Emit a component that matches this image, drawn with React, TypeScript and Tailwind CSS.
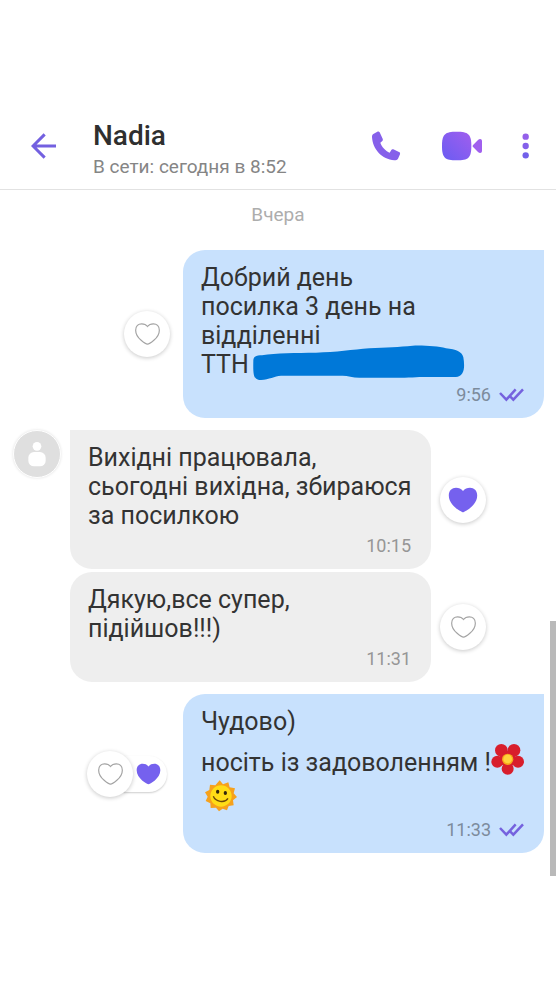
import type { ReactNode } from "react";
import clsx from "clsx";

// types
interface Message {
  id: number;
  own: boolean;
  tail: boolean;
  avatar: boolean;
  content: ReactNode;
  time: string;
  reaction: "none" | "liked" | "both";
}

const HEART =
  "M37.5 63 C34 63 2 46 2 21 C2 9 10 2 20 2 C27 2 33 4 37.5 10 C42 4 48 2 55 2 C65 2 73 9 73 21 C73 46 41 63 37.5 63Z";

// icons
const BackIcon = () => (
  <svg viewBox="93 70 78 78" className="size-[26px]" fill="none" stroke="#7360e0" strokeWidth="9">
    <path d="M134 74 L99 109 L134 144 M99 109 H168" />
  </svg>
);

const PhoneIcon = () => (
  <svg viewBox="96 63 90 90" className="size-[30px]">
    <path
      fill="#8660ea"
      d="M112 65 C116 64 119 66 120 69 L128 86 C129 89 129 91 127 93 L121 98 C125 110 136 122 149 128 L154 120 C156 118 158 118 160 118 L177 126 C180 127 181 130 180 133 L174 146 C172 150 168 151 163 151 C126 148 98 118 96 81 C96 77 97 74 100 72 Z"
    />
  </svg>
);

const VideoIcon = () => (
  <svg viewBox="305 63 120 90" className="h-[30px] w-10">
    <defs>
      <linearGradient id="video" x1="0" y1="1" x2="1" y2="0">
        <stop offset="0" stopColor="#6a5cf2" />
        <stop offset="1" stopColor="#a15eee" />
      </linearGradient>
    </defs>
    <path
      fill="url(#video)"
      d="M349 65 C384 65 393 72 393 108 C393 144 384 151 349 151 C314 151 305 144 305 108 C305 72 314 65 349 65Z"
    />
    <path
      fill="#a05fee"
      d="M399 104 L413 90 C418 86 425 86 425 94 V122 C425 130 418 130 413 126 L399 112 C396 109 396 107 399 104Z"
    />
  </svg>
);

const MoreIcon = () => (
  <svg viewBox="544 70 21 78" className="h-[26px] w-[7px]">
    <circle cx="555" cy="81" r="9.5" fill="#9460ea" />
    <circle cx="555" cy="109" r="9.5" fill="#8460ea" />
    <circle cx="555" cy="137" r="9.5" fill="#7260ea" />
  </svg>
);

const HeartOutline = () => (
  <svg viewBox="0 0 75 65" className="h-[22px] w-[25px]" fill="none" stroke="#a3a3a3" strokeWidth="3.5">
    <path d={HEART} />
  </svg>
);

const HeartFilled = ({ className }: { className: string }) => (
  <svg viewBox="0 0 75 65" className={className} fill="#7561ee">
    <path d={HEART} />
  </svg>
);

const SeenIcon = () => (
  <svg viewBox="0 0 75 42" className="h-[14px] w-[25px]" fill="none" stroke="#7562de" strokeWidth="7.5">
    <path d="M3 15 L22 35 L50 4 M34 26 L43 35 L72 4" />
  </svg>
);

const Flower = () => (
  <svg viewBox="9 0 102 117" className="h-[39px] w-[34px]" role="img" aria-label="flower">
    <g fill="#d81e2c">
      <circle cx="40" cy="43" r="19" />
      <circle cx="78" cy="43" r="19" />
      <circle cx="90" cy="77" r="18" />
      <circle cx="59" cy="98" r="18" />
      <circle cx="28" cy="77" r="18" />
      <circle cx="59" cy="69" r="24" />
    </g>
    <circle cx="59" cy="70" r="17" fill="#f7a81b" />
    <circle cx="59" cy="69" r="13" fill="#ffd23c" />
  </svg>
);

const Sun = () => (
  <svg viewBox="0 0 111 117" className="h-[39px] w-[37px]" role="img" aria-label="sun">
    <path
      fill="#f6a11c"
      d="M56 16 L66 28 L82 22 L86 37 L102 40 L98 55 L108 66 L96 76 L98 91 L83 93 L78 106 L65 101 L54 109 L45 98 L29 99 L28 85 L14 78 L20 65 L12 52 L25 45 L27 29 L43 31 Z"
    />
    <circle cx="60" cy="63" r="32" fill="#ffdc16" />
    <ellipse cx="50" cy="50" rx="5" ry="6" fill="#33270c" />
    <ellipse cx="73" cy="54" rx="5" ry="6" fill="#33270c" />
    <path d="M37 64 C43 80 71 86 81 70" fill="none" stroke="#6b4708" strokeWidth="4" />
  </svg>
);

// messages
const messages: Message[] = [
  {
    id: 1,
    own: true,
    tail: true,
    avatar: false,
    time: "9:56",
    reaction: "none",
    content: (
      <>
        Добрий день<br />
        посилка 3 день на<br />
        відділенні
        <div className="flex">
          ТТН
          {/* hidden parcel number */}
          <svg viewBox="221 316 636 106" className="-mt-[5px] -mb-[2px] ml-1 h-[36px] w-[212px]" role="img" aria-label="hidden number">
            <path
              fill="#0078d8"
              d="M222 360 C223 349 234 344 248 346 C290 338 350 339 410 338 C470 337 520 329 570 325 C620 322 660 321 700 317 C740 316 775 319 800 325 C830 328 848 335 852 352 C855 370 856 388 849 400 C843 409 836 412 826 411 H720 C680 414 620 414 540 413 C520 413 505 407 490 407 H305 C285 409 270 418 245 420 C222 420 221 405 222 360Z"
            />
          </svg>
        </div>
      </>
    ),
  },
  {
    id: 2,
    own: false,
    tail: true,
    avatar: true,
    time: "10:15",
    reaction: "liked",
    content: (
      <>
        Вихідні працювала,<br />
        сьогодні вихідна, збираюся<br />
        за посилкою
      </>
    ),
  },
  {
    id: 3,
    own: false,
    tail: false,
    avatar: false,
    time: "11:31",
    reaction: "none",
    content: (
      <>
        Дякую,все супер,<br />
        підійшов!!!)
      </>
    ),
  },
  {
    id: 4,
    own: true,
    tail: true,
    avatar: false,
    time: "11:33",
    reaction: "both",
    content: (
      <>
        Чудово)
        <div className="flex flex-wrap items-end">
          <span className="leading-6">носіть із задоволенням !</span>
          <Flower />
          <Sun />
        </div>
      </>
    ),
  },
];

// Reaction
// round like button shown beside a bubble
const Reaction = ({ reaction }: { reaction: Message["reaction"] }) => (
  <div className="flex shrink-0 items-center">
    <button
      aria-label="Like"
      className="relative z-10 grid size-[46px] place-items-center rounded-full bg-white shadow-[0_1px_4px_rgba(0,0,0,0.22)]"
    >
      {reaction === "liked" ? <HeartFilled className="h-[26px] w-[30px]" /> : <HeartOutline />}
    </button>
    {reaction === "both" && (
      <div className="-ml-6 mr-[3px] flex h-9 w-[58px] items-center justify-end rounded-full bg-white pr-[6px] shadow-[0_1px_2px_rgba(0,0,0,0.2)]">
        <HeartFilled className="h-[22px] w-[25px]" />
      </div>
    )}
  </div>
);

// Bubble
// shows a single message
const Bubble = ({ message }: { message: Message }) => (
  <div
    className={clsx(
      "w-full max-w-[361px] rounded-[22px] py-[13px] pr-3 pl-[18px] text-[25px] leading-[29px] text-[#333]",
      message.own ? "bg-[#c8e1fd]" : "bg-[#eeeeee]",
      message.tail && (message.own ? "rounded-tr-none" : "rounded-tl-none")
    )}
  >
    {message.content}
    <div
      className={clsx(
        "mt-[6px] flex items-center justify-end gap-2 pr-2 text-[18px] leading-5",
        message.own ? "text-[#7c8b9c]" : "text-[#969696]"
      )}
    >
      <time>{message.time}</time>
      {message.own && <SeenIcon />}
    </div>
  </div>
);

// Avatar
const Avatar = () => (
  <div className="size-12 rounded-full border border-white bg-[#dfdfdf] shadow-[0_0_3px_rgba(0,0,0,0.12)]">
    <svg viewBox="0 0 138 138" className="size-full" fill="#fff">
      <circle cx="69" cy="46" r="13" />
      <rect x="43" y="63" width="52" height="43" rx="17" />
    </svg>
  </div>
);

export default function App() {
  return (
    <main className="bg-white pt-[104px] font-['Roboto',sans-serif]">

      {/* header */}
      <header className="flex items-center gap-10 border-b border-[#e2e2e2] pt-[9px] pr-[27px] pb-[10px] pl-[31px]">
        <button aria-label="Back"><BackIcon /></button>
        <div className="-ml-1 flex-1 pt-1 whitespace-nowrap">
          <h1 className="text-[28px] leading-[38px] font-medium text-[#2f2f2f]">Nadia</h1>
          <p className="text-[19px] leading-6 text-[#858585]">В сети: сегодня в 8:52</p>
        </div>
        <button aria-label="Call"><PhoneIcon /></button>
        <button aria-label="Video call"><VideoIcon /></button>
        <button aria-label="More"><MoreIcon /></button>
      </header>

      {/* conversation */}
      <section className="relative pb-[23px]">
        <p className="pt-[13px] pb-[23px] text-center text-[19px] leading-6 text-[#adadad]">Вчера</p>

        {messages.map((message) => (
          <div
            key={message.id}
            className={clsx(
              "flex items-center pr-3",
              message.own ? "justify-end gap-[13px] pl-3" : "gap-[9px] pl-[13px]",
              message.id === 3 && "mt-[3px]",
              (message.id === 2 || message.id === 4) && "mt-3"
            )}
          >
            {message.own && <Reaction reaction={message.reaction} />}
            {!message.own && (
              <div className="w-12 shrink-0 self-start">
                {message.avatar && <Avatar />}
              </div>
            )}
            <Bubble message={message} />
            {!message.own && <Reaction reaction={message.reaction} />}
          </div>
        ))}

        {/* scrollbar */}
        <div className="absolute right-0 bottom-0 h-[255px] w-[6px] bg-[#b9b9b9]" />
      </section>
    </main>
  );
}
